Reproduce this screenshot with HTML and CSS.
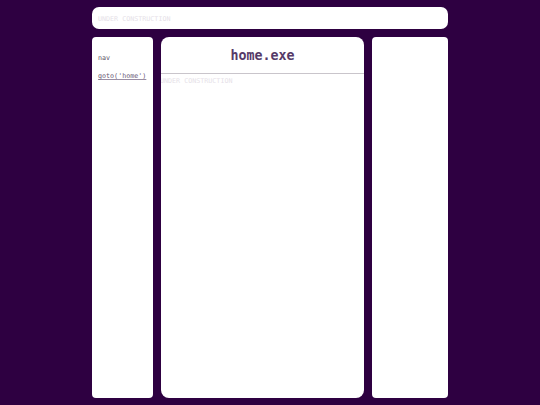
FILE: index.html
```html
<!DOCTYPE html>
<html>
<head>
<meta charset="utf-8">
<link rel="stylesheet" href="styles.css">
</head>
<body>
<div class="page">
  <header class="topbar">UNDER CONSTRUCTION</header>
  <div class="columns">
    <nav class="side left">
      <div class="nav-title">nav</div>
      <a class="nav-link" href="#">goto('home')</a>
    </nav>
    <main class="main">
      <div class="main-head"><h1>home.exe</h1></div>
      <div class="main-body">UNDER CONSTRUCTION</div>
    </main>
    <aside class="side right"></aside>
  </div>
</div>
</body>
</html>
```
FILE: styles.css
```css
html, body {
  margin: 0;
  padding: 0;
  height: 100%;
}
body {
  background: #2e0041;
  font-family: "DejaVu Sans Mono", "Liberation Mono", monospace;
}
.page {
  width: 356px;
  margin: 0 auto;
  padding-top: 7px;
  display: flex;
  flex-direction: column;
  gap: 8px;
  height: 391px;
}
.topbar {
  height: 22px;
  background: #fff;
  border-radius: 7px;
  padding: 1px 0 0 6px;
  font-size: 6.7px;
  line-height: 22px;
  color: #e6dfe8;
  box-sizing: border-box;
}
.columns {
  flex: 1;
  display: flex;
  gap: 8px;
}
.side {
  background: #fff;
  border-radius: 4px;
}
.left {
  width: 61px;
  padding: 17px 6px 0;
  box-sizing: border-box;
  display: flex;
  flex-direction: column;
  gap: 10px;
}
.nav-title {
  font-size: 6.7px;
  line-height: 8px;
  color: #5a4e62;
}
.nav-link {
  font-size: 6.7px;
  line-height: 8px;
  color: #6a5a76;
  text-decoration: underline;
  text-decoration-color: #9a8ea4;
}
.right {
  width: 76px;
}
.main {
  width: 203px;
  background: #fff;
  border-radius: 8px;
  overflow: hidden;
}
.main-head {
  height: 37px;
  padding-top: 1px;
  box-sizing: border-box;
  border-bottom: 1px solid #c9c5cb;
  display: flex;
  align-items: center;
  justify-content: center;
}
.main-head h1 {
  margin: 0;
  font-size: 13.3px;
  font-weight: bold;
  color: #563a68;
}
.main-body {
  margin-left: -1px;
  padding-top: 3px;
  font-size: 6.7px;
  line-height: 8px;
  color: #e6dfe8;
}
```
